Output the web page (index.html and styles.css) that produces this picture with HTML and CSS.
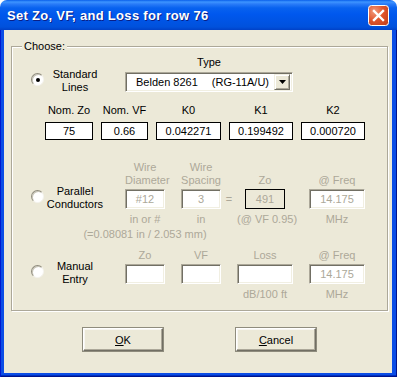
FILE: index.html
```html
<!DOCTYPE html>
<html lang="en">
<head>
    <meta charset="UTF-8">
    <title>Set Zo, VF, and Loss for row 76</title>
    <link rel="stylesheet" href="styles.css">
</head>
<body>
    <div class="window">
        <div class="titlebar">
            <span class="title">Set Zo, VF, and Loss for row 76</span>
            <span class="close">
                <svg width="21" height="21" viewBox="0 0 21 21">
                    <defs>
                        <radialGradient id="cg" cx="0.3" cy="0.3" r="0.9">
                            <stop offset="0" stop-color="#f29a7c"/>
                            <stop offset="0.5" stop-color="#e0552c"/>
                            <stop offset="1" stop-color="#c2401c"/>
                        </radialGradient>
                    </defs>
                    <rect x="0.5" y="0.5" width="20" height="20" rx="3" fill="url(#cg)" stroke="#ffffff"/>
                    <path d="M6 6 L15 15 M15 6 L6 15" stroke="#ffffff" stroke-width="2.4" stroke-linecap="square"/>
                </svg>
            </span>
        </div>
        <div class="frame">
            <div class="client">
                <div class="group">
                    <span class="legend">Choose:</span>

                    <div class="std-top">
                        <div class="choice std-choice">
                            <span class="radio checked"></span>
                            <span class="choice-label">Standard<br>Lines</span>
                        </div>
                        <div class="type">
                            <div class="lbl">Type</div>
                            <div class="combo">
                                <span class="combo-text">Belden 8261<span class="combo-sub">(RG-11A/U)</span></span>
                                <span class="combo-btn">
                                    <svg width="7" height="4" viewBox="0 0 7 4"><path d="M0 0 H7 L3.5 4 Z" fill="#000"/></svg>
                                </span>
                            </div>
                        </div>
                    </div>

                    <div class="params">
                        <div class="lbl">Nom. Zo</div>
                        <div class="lbl">Nom. VF</div>
                        <div class="lbl">K0</div>
                        <div class="lbl">K1</div>
                        <div class="lbl">K2</div>
                        <div class="box">75</div>
                        <div class="box">0.66</div>
                        <div class="box">0.042271</div>
                        <div class="box">0.199492</div>
                        <div class="box">0.000720</div>
                    </div>

                    <div class="section parallel">
                        <div class="choice par-choice">
                            <span class="radio"></span>
                            <span class="choice-label">Parallel<br>Conductors</span>
                        </div>
                        <div class="fields par-fields">
                            <div class="dim c1 r1">Wire<br>Diameter</div>
                            <div class="dim c3 r1">Wire<br>Spacing</div>
                            <div class="dim c5 r1">Zo</div>
                            <div class="dim c7 r1">@ Freq</div>
                            <div class="edit c1 r2">#12</div>
                            <div class="edit c3 r2">3</div>
                            <div class="dim eq c4 r2">=</div>
                            <div class="zo c5 r2">491</div>
                            <div class="edit c7 r2">14.175</div>
                            <div class="dim c1 r3">in or #</div>
                            <div class="dim c3 r3">in</div>
                            <div class="dim c5 r3">(@ VF 0.95)</div>
                            <div class="dim c7 r3">MHz</div>
                            <div class="dim wide c1 r4">(=0.08081 in / 2.053 mm)</div>
                        </div>
                    </div>

                    <div class="section manual">
                        <div class="choice man-choice">
                            <span class="radio"></span>
                            <span class="choice-label">Manual<br>Entry</span>
                        </div>
                        <div class="fields man-fields">
                            <div class="dim c1 r1">Zo</div>
                            <div class="dim c3 r1">VF</div>
                            <div class="dim c5 r1">Loss</div>
                            <div class="dim c7 r1">@ Freq</div>
                            <div class="edit c1 r2"></div>
                            <div class="edit c3 r2"></div>
                            <div class="edit c5 r2"></div>
                            <div class="edit c7 r2">14.175</div>
                            <div class="dim c5 r3">dB/100 ft</div>
                            <div class="dim c7 r3">MHz</div>
                        </div>
                    </div>
                </div>

                <div class="buttons">
                    <button class="btn"><u>O</u>K</button>
                    <button class="btn"><u>C</u>ancel</button>
                </div>
            </div>
        </div>
    </div>
</body>
</html>
```

FILE: styles.css
```css
body {
    margin: 0;
    background-color: #ffffff;
    font-family: 'Liberation Sans', Arial, sans-serif;
    font-size: 11px;
    line-height: 13px;
    color: #000000;
}
.window {
    width: 397px;
    height: 377px;
    display: flex;
    flex-direction: column;
}
.titlebar {
    height: 30px;
    flex: none;
    display: flex;
    align-items: center;
    justify-content: space-between;
    padding: 0 8px 0 7px;
    border-radius: 7px 7px 0 0;
    background: linear-gradient(to bottom, #0a5fea 0px, #3d95ff 2px, #2a7cf8 4px, #0862ef 8px, #0058ee 14px, #0054e3 22px, #0051dc 27px, #0041c7 30px);
}
.title {
    color: #ffffff;
    font-weight: bold;
    font-size: 13px;
    letter-spacing: 0.3px;
    text-shadow: 1px 1px 0 #0a1f86;
    margin-top: 1px;
}
.close {
    display: flex;
    width: 21px;
    height: 21px;
    margin-top: 1px;
}
.frame {
    flex: 1;
    padding: 0 5px 4px 4px;
    background-color: #0b4de6;
    box-shadow: inset 1px 0 0 #0019cf, inset -1px 0 0 #00138c, inset 0 -1px 0 #00138c, inset 0 -2px 0 #0030c0;
    display: flex;
}
.client {
    flex: 1;
    background-color: #ece9d8;
}
.group {
    position: relative;
    margin: 16px 4px 0 7px;
    padding: 9px 0 9px 0;
    border: 1px solid #aca899;
    box-shadow: inset 1px 1px 0 #ffffff, 1px 1px 0 #ffffff;
}
.legend {
    position: absolute;
    left: 10px;
    top: -7px;
    padding: 0 2px;
    background-color: #ece9d8;
}
.lbl {
    text-align: center;
}
.std-top {
    display: flex;
    align-items: flex-start;
}
.choice {
    display: flex;
    align-items: flex-start;
    padding-left: 19px;
    width: 94px;
    box-sizing: border-box;
    flex: none;
}
.std-choice {
    margin-top: 12px;
}
.par-choice {
    margin-top: 24px;
}
.man-choice {
    margin-top: 11px;
}
.radio {
    width: 13px;
    height: 13px;
    box-sizing: border-box;
    margin-top: 5px;
    border-radius: 50%;
    background-color: #ffffff;
    border: 1px solid;
    border-color: #8f8c7d #f4f3ee #f4f3ee #8f8c7d;
    box-shadow: inset 1px 1px 0 #c9c6b8;
    display: flex;
    align-items: center;
    justify-content: center;
    flex: none;
}
.radio.checked::after {
    content: "";
    width: 4px;
    height: 4px;
    border-radius: 50%;
    background-color: #000000;
}
.choice-label {
    width: 62px;
    text-align: center;
}
.type {
    margin-left: 19px;
    width: 168px;
}
.combo {
    margin-top: 3px;
    height: 20px;
    box-sizing: border-box;
    display: flex;
    align-items: center;
    justify-content: space-between;
    background-color: #ffffff;
    border: 1px solid;
    border-color: #aca899 #ffffff #ffffff #aca899;
    box-shadow: inset 1px 1px 0 #716f64, inset -1px -1px 0 #f1efe2;
    padding: 0 2px 0 10px;
}
.combo-sub {
    margin-left: 14px;
}
.combo-btn {
    width: 16px;
    height: 16px;
    box-sizing: border-box;
    background-color: #ece9d8;
    border: 1px solid;
    border-color: #f1efe2 #716f64 #716f64 #f1efe2;
    box-shadow: inset 1px 1px 0 #ffffff, inset -1px -1px 0 #aca899;
    display: flex;
    align-items: center;
    justify-content: center;
}
.params {
    display: grid;
    grid-template-columns: 48px 47px 65px 64px 64px;
    column-gap: 8px;
    row-gap: 5px;
    margin: 10px 0 0 33px;
}
.box {
    height: 18px;
    box-sizing: border-box;
    border: 1px solid #000000;
    background-color: #ffffff;
    text-align: center;
    line-height: 16px;
}
.section {
    display: flex;
    align-items: flex-start;
}
.parallel {
    margin-top: 21px;
}
.manual {
    margin-top: 8px;
}
.fields {
    display: grid;
    grid-template-columns: 40px 16px 40px 16px 56px 16px 56px;
    margin-left: 19px;
}
.par-fields {
    grid-template-rows: 28px 24px 15px 13px;
}
.man-fields {
    grid-template-rows: 15px 24px 13px;
}
.c1 { grid-column: 1; }
.c3 { grid-column: 3; }
.c4 { grid-column: 4; }
.c5 { grid-column: 5; }
.c7 { grid-column: 7; }
.r1 { grid-row: 1; }
.r2 { grid-row: 2; }
.r3 { grid-row: 3; }
.r4 { grid-row: 4; }
.dim {
    color: #aca899;
    text-align: center;
    align-self: start;
    white-space: nowrap;
}
.par-fields .r1 {
    align-self: end;
    margin-bottom: 2px;
}
.eq {
    line-height: 20px;
}
.wide {
    justify-self: center;
}
.edit {
    height: 20px;
    box-sizing: border-box;
    background-color: #ffffff;
    border: 1px solid;
    border-color: #aca899 #ffffff #ffffff #aca899;
    box-shadow: inset 1px 1px 0 #716f64, inset -1px -1px 0 #f1efe2;
    color: #aca899;
    text-align: center;
    line-height: 18px;
}
.zo {
    width: 40px;
    height: 20px;
    box-sizing: border-box;
    justify-self: center;
    border: 1px solid #000000;
    color: #aca899;
    text-align: center;
    line-height: 18px;
}
.buttons {
    display: flex;
    gap: 73px;
    padding-left: 79px;
    margin-top: 17px;
}
.btn {
    width: 80px;
    height: 23px;
    font-family: 'Liberation Sans', Arial, sans-serif;
    font-size: 11px;
    color: #000000;
    background-color: #ece9d8;
    border: 1px solid;
    border-color: #ffffff #716f64 #716f64 #ffffff;
    box-shadow: inset -1px -1px 0 #aca899, inset 1px 1px 0 #f8f7f2, 0 0 0 1px #8f8c7d;
    padding: 0;
}
```
